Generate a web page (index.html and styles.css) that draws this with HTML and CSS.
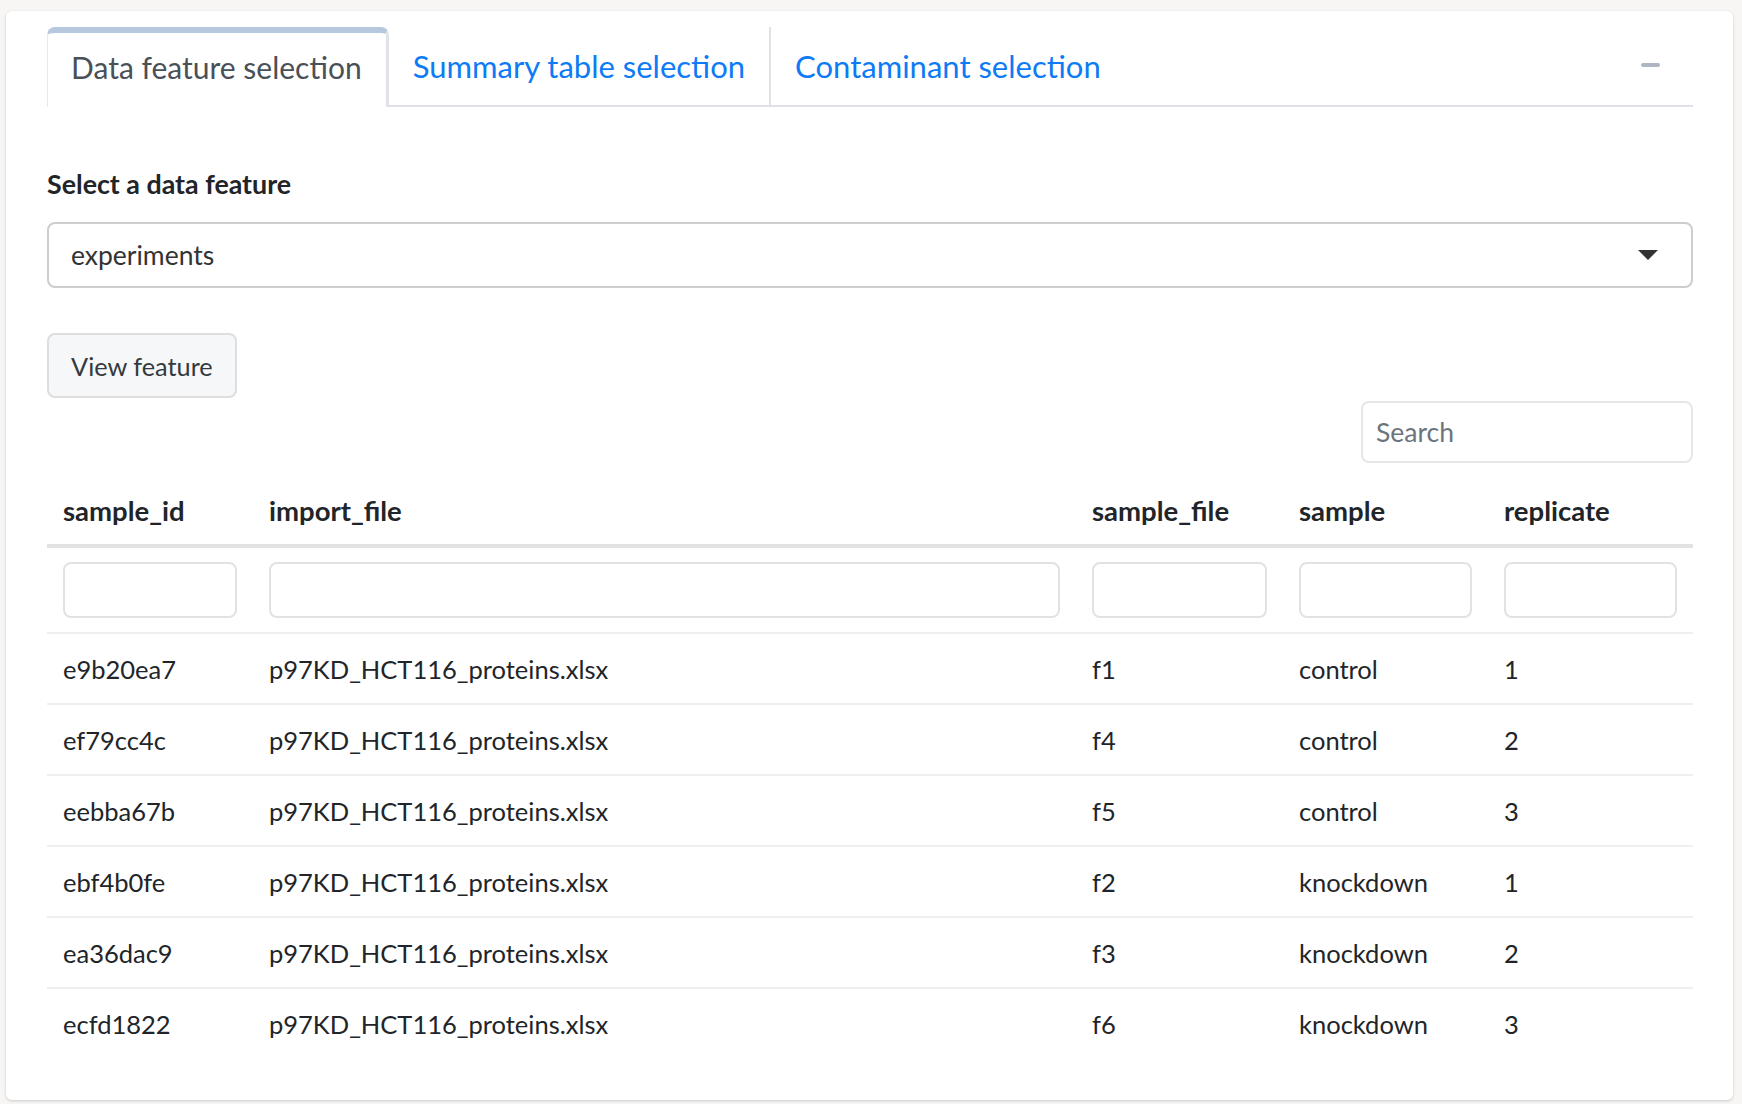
FILE: index.html
```html
<!DOCTYPE html>
<html lang="en">
<head>
<meta charset="utf-8">
<title>Data feature selection</title>
<link rel="stylesheet" href="styles.css">
</head>
<body>
<div class="page">
  <div class="card">
    <div class="nav">
      <div class="tab active">Data feature selection</div>
      <div class="tab link sep">Summary table selection</div>
      <div class="tab link">Contaminant selection</div>
      <div class="tool"><span class="minus"></span></div>
    </div>
    <div class="tab-content">
      <div class="label">Select a data feature</div>
      <div class="select">
        <span class="select-value">experiments</span>
        <span class="caret"></span>
      </div>
      <div class="btn">View feature</div>
      <div class="search-row">
        <div class="search">Search</div>
      </div>
      <table class="dt">
        <colgroup>
          <col class="c1"><col class="c2"><col class="c3"><col class="c4"><col class="c5">
        </colgroup>
        <thead>
          <tr class="head">
            <th>sample_id</th><th>import_file</th><th>sample_file</th><th>sample</th><th>replicate</th>
          </tr>
          <tr class="filters">
            <td><div class="finput"></div></td>
            <td><div class="finput"></div></td>
            <td><div class="finput"></div></td>
            <td><div class="finput"></div></td>
            <td><div class="finput"></div></td>
          </tr>
        </thead>
        <tbody>
          <tr><td>e9b20ea7</td><td>p97KD_HCT116_proteins.xlsx</td><td>f1</td><td>control</td><td>1</td></tr>
          <tr><td>ef79cc4c</td><td>p97KD_HCT116_proteins.xlsx</td><td>f4</td><td>control</td><td>2</td></tr>
          <tr><td>eebba67b</td><td>p97KD_HCT116_proteins.xlsx</td><td>f5</td><td>control</td><td>3</td></tr>
          <tr><td>ebf4b0fe</td><td>p97KD_HCT116_proteins.xlsx</td><td>f2</td><td>knockdown</td><td>1</td></tr>
          <tr><td>ea36dac9</td><td>p97KD_HCT116_proteins.xlsx</td><td>f3</td><td>knockdown</td><td>2</td></tr>
          <tr><td>ecfd1822</td><td>p97KD_HCT116_proteins.xlsx</td><td>f6</td><td>knockdown</td><td>3</td></tr>
        </tbody>
      </table>
    </div>
  </div>
</div>
</body>
</html>
```
FILE: styles.css
```css
* { box-sizing: border-box; }
html, body { margin: 0; padding: 0; }
body {
  background: #f7f6f4;
  font-family: "Lato", "Open Sans", sans-serif;
  color: #212529;
}
.page {
  padding: 11px 9px 4px 6px;
}
.card {
  background: #fff;
  border-radius: 6px;
  box-shadow: 0 1px 3px rgba(0,0,0,0.18);
  padding: 16px 40px 40px 41px;
  height: 1089px;
}
.nav {
  display: flex;
  align-items: stretch;
  height: 80px;
  border-bottom: 2px solid #dee2e6;
}
.tab {
  font-size: 30px;
  line-height: 68px;
  padding: 0 24px;
  white-space: nowrap;
}
.tab.active {
  color: #495057;
  background: #fff;
  border-top: 6px solid #b5c8de;
  border-left: 1px solid #e6e9ed;
  border-right: 3px solid #dfe3e8;
  border-radius: 8px 8px 0 0;
  margin-bottom: -2px;
  height: 80px;
  padding-left: 23px;
}
.tab.link {
  color: #0d7bf6;
  font-size: 31px;
  line-height: 78px;
}
.tab.sep {
  border-right: 2px solid #dee2e6;
}
.tool {
  margin-left: auto;
  margin-right: 33px;
  display: flex;
  align-items: center;
  padding-bottom: 3px;
}
.minus {
  display: block;
  width: 19px;
  height: 4px;
  border-radius: 2px;
  background: #aeb6c1;
}
.tab-content {
  padding-top: 56px;
}
.label {
  font-weight: 700;
  font-size: 26.8px;
  line-height: 42px;
  margin-bottom: 17px;
}
.select {
  display: flex;
  align-items: center;
  height: 66px;
  border: 2px solid #cdcdcd;
  border-radius: 8px;
  padding: 0 33px 0 22px;
  font-size: 26.5px;
  color: #333;
}
.select-value { flex: 1; }
.caret {
  width: 0;
  height: 0;
  border-left: 10px solid transparent;
  border-right: 10px solid transparent;
  border-top: 10px solid #333;
}
.btn {
  display: inline-flex;
  align-items: center;
  margin-top: 45px;
  height: 65px;
  padding: 0 22px;
  border: 2px solid #dedede;
  border-radius: 8px;
  background: #f6f7f9;
  font-size: 25.3px;
  color: #343a40;
}
.search-row {
  display: flex;
  justify-content: flex-end;
  margin-top: 3px;
}
.search {
  width: 332px;
  height: 62px;
  border: 2px solid #e6e6e6;
  border-radius: 8px;
  padding: 0 13px;
  display: flex;
  align-items: center;
  font-size: 26.5px;
  color: #6c757d;
}
.dt {
  width: 100%;
  border-collapse: collapse;
  table-layout: fixed;
  margin-top: 15px;
  font-size: 25.5px;
}
.c1 { width: 206px; }
.c2 { width: 823px; }
.c3 { width: 207px; }
.c4 { width: 205px; }
.c5 { width: 205px; }
.dt th {
  text-align: left;
  font-weight: 700;
  font-size: 27.5px;
  padding: 12px 16px;
  line-height: 42px;
  border-bottom: 4px solid #e2e2e2;
}
.filters td {
  padding: 14px 16px;
  border-bottom: 2px solid #efefef;
}
.finput {
  height: 56px;
  border: 2px solid #e2e2e2;
  border-radius: 8px;
  background: #fff;
}
.dt tbody td {
  height: 71px;
  padding: 0 16px;
  vertical-align: middle;
  white-space: nowrap;
}
.dt tbody tr + tr td {
  border-top: 2px solid #efefef;
}
```
